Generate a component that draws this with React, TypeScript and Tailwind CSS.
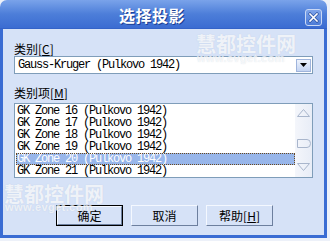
import React from "react";

const mono = { fontFamily: '"Liberation Mono", monospace' };
const wmShadow = { textShadow: "0 0 1px rgba(150,165,190,0.35)" };

function U({ c }: { c: string }) {
  return <span className="underline underline-offset-[1px]">{c}</span>;
}

export default function App() {
  const rows = [16, 17, 18, 19, 20, 21];
  return (
    <div
      className="relative w-[330px] h-[241px] overflow-hidden bg-[#edf1f9]"
      style={{ fontFamily: '"Noto Sans CJK SC", sans-serif' }}
    >
      <div className="flex flex-col w-[327px] h-[238px] rounded-t-[7px] overflow-hidden">
        {/* Title bar */}
        <div className="relative h-[29px] shrink-0 flex items-center bg-gradient-to-b from-[#7aa3ea] via-[#4d7ed9] to-[#3b6cd2] border-b border-[#3463c8]">
          <div
            className="absolute left-[119px] top-[5px] text-[16px] leading-[20px] font-bold text-white tracking-[0.5px]"
            style={{ textShadow: "1px 1px 0 #1c3f94" }}
          >
            选择投影
          </div>
          <div className="absolute left-[305px] top-[9px] w-[17px] h-[17px] rounded-[3px] border border-[#c9d8f5] bg-gradient-to-b from-[#7ea4ea] to-[#4c7bd7] flex items-center justify-center">
            <svg width="11" height="11" viewBox="0 0 11 11">
              <path d="M2 2 L9 9 M9 2 L2 9" stroke="#2a4f9e" strokeWidth="3" strokeLinecap="square" />
              <path d="M2 2 L9 9 M9 2 L2 9" stroke="#ffffff" strokeWidth="1.6" strokeLinecap="square" />
            </svg>
          </div>
        </div>
        {/* Client area with frame */}
        <div className="flex-1 flex flex-col border-x-[3px] border-b-[3px] border-[#3a6cd3] bg-[#d6e2f7] pl-[11px] pt-[13px] text-[12px] text-black">
          <div className="h-[14px] leading-[14px]">
            类别[<U c="C" />]
          </div>
          <div className="w-[299px] h-[18px] border border-[#7f9db9] bg-white flex items-center pl-[3px] pr-[1px]">
            <span className="flex-1 text-[12px] tracking-[-1.2px] leading-[14px] whitespace-nowrap" style={mono}>
              Gauss-Kruger (Pulkovo 1942)
            </span>
            <div className="w-[15px] h-[13px] border border-[#9fb4dc] bg-gradient-to-b from-[#eef3fc] to-[#c4d4f2] flex items-center justify-center">
              <svg width="7" height="4" viewBox="0 0 7 4">
                <path d="M0 0 H7 L3.5 4 Z" fill="#000" />
              </svg>
            </div>
          </div>
          <div className="mt-[12px] h-[14px] leading-[14px]">
            类别项[<U c="M" />]
          </div>
          <div className="mt-[3px] w-[299px] h-[75px] border border-[#7f9db9] bg-white flex">
            <div className="flex-1 pt-[1px] pl-[1px]">
              {rows.map((r) => (
                <div
                  key={r}
                  className={
                    "h-[12px] leading-[12px] pl-[1px] text-[12px] tracking-[-1.2px] whitespace-nowrap " +
                    (r === 20
                      ? "bg-[#98b6ea] text-white outline outline-1 outline-dotted outline-[#6b4a20] -outline-offset-1"
                      : "text-black")
                  }
                  style={mono}
                >
                  GK Zone {r} (Pulkovo 1942)
                </div>
              ))}
            </div>
            <div className="w-[17px] h-full bg-gradient-to-r from-[#f4f6fb] to-[#e8edf7]">
              <svg width="17" height="73" viewBox="0 0 17 73">
                <path d="M2.5 12.5 L8.5 5.5 L14.5 12.5 Z" fill="none" stroke="#a9b6cc" strokeWidth="1" />
                <path d="M2.5 35.5 H12 Q15.5 35.5 15.5 39.5 Q15.5 43.5 12 43.5 H2.5 Z" fill="none" stroke="#a9b6cc" strokeWidth="1" />
                <path d="M2.5 59.5 L8.5 66.5 L14.5 59.5 Z" fill="none" stroke="#a9b6cc" strokeWidth="1" />
              </svg>
            </div>
          </div>
          <div className="mt-[27px] pl-[42px] flex gap-[8px]">
            <button className="w-[67px] h-[21px] border border-black bg-[#d6e2f7] p-0">
              <div className="h-full border-t border-l border-[#f4f8ff] border-r border-b border-r-[#6d7f9e] border-b-[#6d7f9e] flex items-center justify-center leading-[14px]">
                确定
              </div>
            </button>
            <button className="w-[67px] h-[21px] border-t border-l border-[#f4f8ff] border-r border-b border-r-[#6d7f9e] border-b-[#6d7f9e] bg-[#d6e2f7] flex items-center justify-center leading-[14px]">
              取消
            </button>
            <button className="w-[67px] h-[21px] border-t border-l border-[#f4f8ff] border-r border-b border-r-[#6d7f9e] border-b-[#6d7f9e] bg-[#d6e2f7] flex items-center justify-center leading-[14px]">
              帮助[<U c="H" />]
            </button>
          </div>
        </div>
      </div>
      {/* Watermarks */}
      <div
        className="pointer-events-none absolute left-[196px] top-[33px] text-[20px] leading-[22px] font-bold text-white/75"
        style={wmShadow}
      >
        慧都控件网
      </div>
      <div
        className="pointer-events-none absolute left-[197px] top-[52px] text-[11px] leading-[12px] font-bold text-white/70 tracking-[0.4px]"
        style={{ fontFamily: '"Liberation Sans", sans-serif', ...wmShadow }}
      >
        www.evget.com
      </div>
      <div
        className="pointer-events-none absolute left-[4px] top-[183px] text-[20px] leading-[22px] font-bold text-white/75"
        style={wmShadow}
      >
        慧都控件网
      </div>
      <div
        className="pointer-events-none absolute left-[5px] top-[201px] text-[11px] leading-[12px] font-bold text-white/70 tracking-[0.4px]"
        style={{ fontFamily: '"Liberation Sans", sans-serif', ...wmShadow }}
      >
        www.evget.com
      </div>
    </div>
  );
}
